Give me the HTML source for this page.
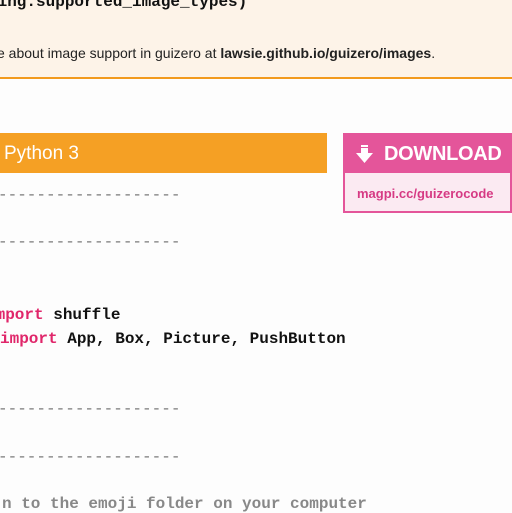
<!DOCTYPE html>
<html><head><style>
body{margin:0;width:512px;height:512px;overflow:hidden;background:#fdfdfd;position:relative;font-family:"Liberation Sans",sans-serif}
.a{position:absolute;white-space:pre}
.m{font-family:"Liberation Mono",monospace;font-size:16px;font-weight:bold;color:#111}
.d{font-family:"Liberation Mono",monospace;font-size:16px;color:#777}
.k{color:#e0266a}
</style></head><body>
<div class="a" style="left:0;top:0;width:512px;height:78px;background:#fdf3e8"></div>
<div class="a" style="left:0;top:77px;width:512px;height:2px;background:#f29a1e"></div>
<div class="a m" style="left:-12px;top:-7px">hing.supported_image_types)</div>
<div class="a" style="left:-3px;top:45px;font-size:14px;color:#222">e about image support in guizero at <b>lawsie.github.io/guizero/images</b>.</div>
<div class="a" style="left:0;top:133px;width:327px;height:40px;background:#f5a024"></div>
<div class="a" style="left:4px;top:143px;font-size:19px;color:#fff">Python 3</div>
<div class="a" style="left:343px;top:133px;width:169px;height:80px;background:#fbeaf2;box-sizing:border-box;border:2px solid #e4559a"></div>
<div class="a" style="left:343px;top:133px;width:169px;height:40px;background:#e4559a"></div>
<svg class="a" style="left:355px;top:144px" width="20" height="20" viewBox="0 0 20 20"><rect x="6" y="1" width="7" height="2" fill="#fff"/><rect x="6" y="4" width="7" height="5" fill="#fff"/><path d="M1 9H18L9.5 19Z" fill="#fff"/></svg>
<div class="a" style="left:384px;top:143px;font-size:20px;font-weight:bold;color:#fff;letter-spacing:-0.3px">DOWNLOAD</div>
<div class="a" style="left:357px;top:186px;font-size:13px;font-weight:bold;color:#d63a84">magpi.cc/guizerocode</div>
<div class="a d" style="left:-2px;top:186px">-------------------</div>
<div class="a d" style="left:-2px;top:233px">-------------------</div>
<div class="a m" style="left:-14px;top:306px"><span class="k">import</span> shuffle</div>
<div class="a m" style="left:0px;top:330px"><span class="k">import</span> App, Box, Picture, PushButton</div>
<div class="a d" style="left:-2px;top:400px">-------------------</div>
<div class="a d" style="left:-2px;top:448px">-------------------</div>
<div class="a d" style="left:2px;top:495px;font-weight:bold;color:#888">n to the emoji folder on your computer</div>
</body></html>
